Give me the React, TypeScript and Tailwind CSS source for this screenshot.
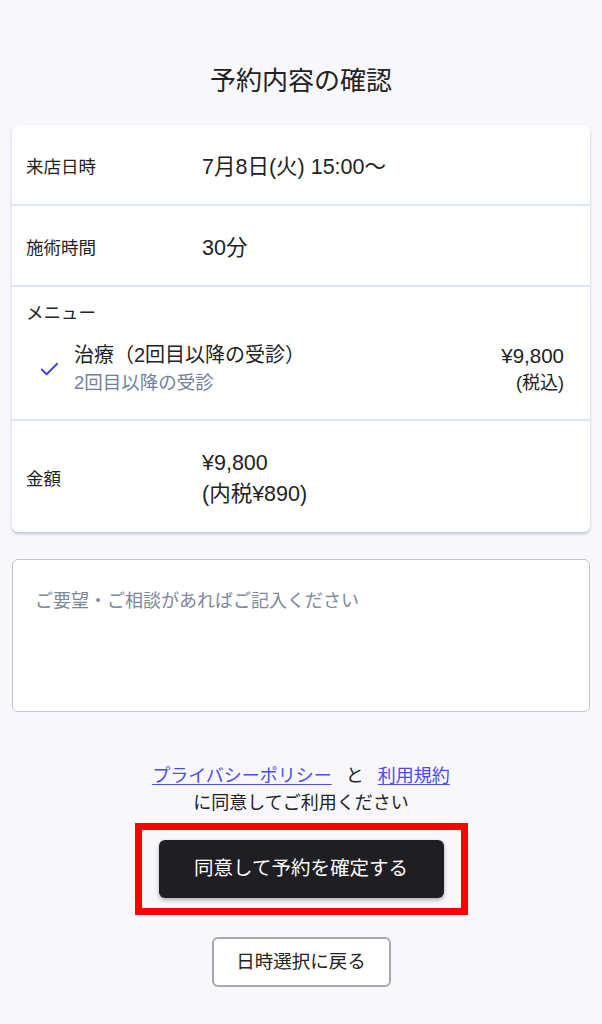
import { Check } from 'lucide-react'

const font = { fontFamily: '"Liberation Sans", "Noto Sans CJK JP", sans-serif' }

const Row = ({ label, children, className = '' }: { label: string; children: React.ReactNode; className?: string }) => (
  <div className={`flex items-center px-[14px] pt-[5px] ${className}`}>
    <div className="w-[176px] shrink-0 text-[17.5px] text-[#222]">{label}</div>
    <div className="text-[21.5px] text-[#222] leading-[31px]">{children}</div>
  </div>
)

export default function App() {
  return (
    <div className="min-h-[1024px] bg-[#f8f8fc] px-3 pt-[61px] pb-10" style={font}>
      <h1 className="text-center text-[26px] text-[#222] leading-[40px]">予約内容の確認</h1>

      <div className="mt-[24px] rounded-md bg-white shadow-[0_2px_3px_rgba(120,135,160,0.45)]">
        <Row label="来店日時" className="h-[81px] border-b-2 border-[#dfe6ef]">
          7月8日(火) 15:00〜
        </Row>
        <Row label="施術時間" className="h-[81px] border-b-2 border-[#dfe6ef]">
          30分
        </Row>
        <div className="h-[134px] border-b-2 border-[#dfe6ef] px-[14px] pt-[14px]">
          <div className="text-[17.5px] leading-[24px] text-[#222]">メニュー</div>
          <div className="mt-[16px] flex items-center">
            <Check className="ml-[12px] h-[23px] w-[23px] text-[#3f3ff0]" strokeWidth={2} />
            <div className="ml-[13px] flex-1">
              <div className="text-[20px] leading-[28px] text-[#222]">治療（2回目以降の受診）</div>
              <div className="text-[18.5px] leading-[28px] text-[#6f7f9c]">2回目以降の受診</div>
            </div>
            <div className="mr-[12px] text-right">
              <div className="text-[20.5px] leading-[28px] text-[#222]">¥9,800</div>
              <div className="text-[18px] leading-[26px] text-[#222]">(税込)</div>
            </div>
          </div>
        </div>
        <Row label="金額" className="h-[111px]">
          <div>¥9,800</div>
          <div>(内税¥890)</div>
        </Row>
      </div>

      <textarea
        placeholder="ご要望・ご相談があればご記入ください"
        className="mt-[27px] block h-[153px] w-full resize-none rounded-md border border-[#c4c4c8] bg-white px-[22px] py-[28px] text-[18px] text-[#222] placeholder:text-[#7d879c] outline-none"
        style={font}
      />

      <div className="mt-[51px] text-center text-[18px] leading-[27px] text-[#222]">
        <div>
          <a href="#" className="text-[#4b4bf0] underline underline-offset-2">プライバシーポリシー</a>
          <span className="mx-[14px]">と</span>
          <a href="#" className="text-[#4b4bf0] underline underline-offset-2">利用規約</a>
        </div>
        <div>に同意してご利用ください</div>
      </div>

      <div className="mt-[6px] flex justify-center">
        <div className="border-[7px] border-[#ff0000] px-[17px] py-[10px]">
          <button className="h-[58px] w-[285px] rounded-md bg-[#1e1e23] text-[19.5px] text-white shadow-[0_2px_4px_rgba(0,0,0,0.3)]">
            同意して予約を確定する
          </button>
        </div>
      </div>

      <div className="mt-[22px] flex justify-center">
        <button className="h-[50px] w-[179px] rounded-md border-2 border-[#a8a8ac] bg-white text-[18.5px] text-[#222]">
          日時選択に戻る
        </button>
      </div>
    </div>
  )
}
